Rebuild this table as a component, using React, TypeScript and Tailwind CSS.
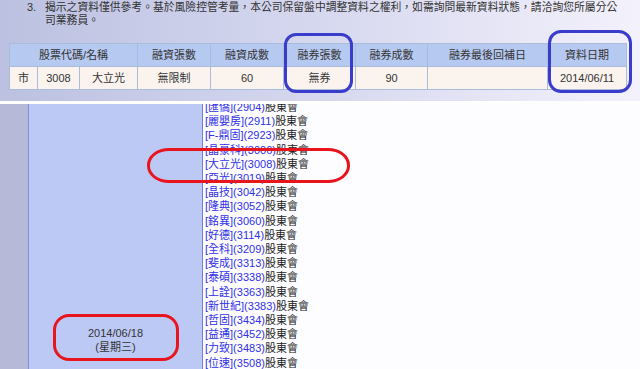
const stocks: [string, string][] = [
  ['匯僑', '2904'],
  ['麗嬰房', '2911'],
  ['F-鼎固', '2923'],
  ['晶豪科', '3006'],
  ['大立光', '3008'],
  ['亞光', '3019'],
  ['晶技', '3042'],
  ['隆典', '3052'],
  ['銘異', '3060'],
  ['好德', '3114'],
  ['全科', '3209'],
  ['斐成', '3313'],
  ['泰碩', '3338'],
  ['上詮', '3363'],
  ['新世紀', '3383'],
  ['哲固', '3434'],
  ['益通', '3452'],
  ['力致', '3483'],
  ['位速', '3508'],
];

const th = 'border border-[#a9bddb] bg-[#b6c9f0] font-normal text-center h-[23px] p-0';
const td = 'border border-[#a9bddb] bg-[#fbf3ee] text-center h-[23px] p-0';

export default function App() {
  return (
    <div className="relative w-[640px] h-[369px] overflow-hidden bg-white text-[11px] text-[#333] font-['Liberation_Sans','Noto_Sans_CJK_TC',sans-serif]">
      {/* top: notice + table */}
      <div className="h-[101px] bg-gradient-to-r from-[#bcc1e1] via-[#d6d8ef] to-[#f3f1fb] pt-px">
        <div className="flex leading-[12.5px]">
          <span className="w-[45px] pl-[27px] shrink-0">3.</span>
          <div className="whitespace-nowrap text-[10.8px]">
            揭示之資料僅供參考。基於風險控管考量，本公司保留盤中調整資料之權利，如需詢問最新資料狀態，請洽詢您所屬分公
            <br />
            司業務員。
          </div>
        </div>
        <table className="ml-[9px] mt-[17px] border-collapse table-fixed w-[617px]">
          <colgroup>
            <col className="w-[28px]" />
            <col className="w-[42px]" />
            <col className="w-[58px]" />
            <col className="w-[73px]" />
            <col className="w-[73px]" />
            <col className="w-[72px]" />
            <col className="w-[72px]" />
            <col className="w-[120px]" />
            <col className="w-[79px]" />
          </colgroup>
          <thead>
            <tr>
              <th colSpan={3} className={th}>股票代碼/名稱</th>
              <th className={th}>融資張數</th>
              <th className={th}>融資成數</th>
              <th className={th}>融券張數</th>
              <th className={th}>融券成數</th>
              <th className={th}>融券最後回補日</th>
              <th className={th}>資料日期</th>
            </tr>
          </thead>
          <tbody>
            <tr>
              <td className={td}>市</td>
              <td className={td}>3008</td>
              <td className={td}>大立光</td>
              <td className={td}>無限制</td>
              <td className={td}>60</td>
              <td className={td}>無券</td>
              <td className={td}>90</td>
              <td className={td}></td>
              <td className={td}>2014/06/11</td>
            </tr>
          </tbody>
        </table>
      </div>
      <div className="h-[3px] bg-white" />

      {/* bottom: calendar cell + list */}
      <div className="flex h-[265px]">
        <div className="w-[29px] bg-[#b6b9d7] border-r border-[#8390de]" />
        <div className="w-[174px] bg-[#bdc9f5] border-r border-[#6f7fd6] flex flex-col items-center justify-end pb-[15px] leading-[14px] text-[#333]">
          <span>2014/06/18</span>
          <span>(星期三)</span>
        </div>
        <div className="flex-1 bg-[#fdfdff] overflow-hidden pl-[2px]">
          <div className="-mt-[4px] leading-[14.2px] text-[#222]">
            {stocks.map(([name, code]) => (
              <div key={code}>
                <span className="text-[#3030e8]">[{name}]({code})</span>股東會
              </div>
            ))}
          </div>
        </div>
      </div>

      {/* annotation marks */}
      <div className="absolute left-[284px] top-[33px] w-[69px] h-[60px] border-[3px] border-[#3a3ccb] rounded-[12px]" />
      <div className="absolute left-[548px] top-[30px] w-[84px] h-[63px] border-[3px] border-[#3a3ccb] rounded-[13px]" />
      <div className="absolute left-[147px] top-[148px] w-[203px] h-[35px] border-[3px] border-[#e8151f] rounded-[22px/17px]" />
      <div className="absolute left-[53px] top-[314px] w-[126px] h-[47px] border-[3px] border-[#e8151f] rounded-[16px]" />
    </div>
  );
}
